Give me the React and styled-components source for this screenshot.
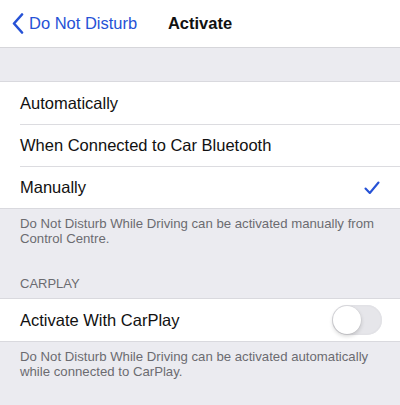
import React, { useState } from "react";
import styled, { createGlobalStyle } from "styled-components";

const Global = createGlobalStyle`
  html, body { margin: 0; padding: 0; }
  body {
    background: #ebebf0;
    font-family: "Liberation Sans", Arial, sans-serif;
    -webkit-font-smoothing: antialiased;
  }
  *, *::before, *::after { box-sizing: border-box; }
`;

const Page = styled.div`
  width: 400px;
  height: 405px;
  background: #ebebf0;
  overflow: hidden;
  display: flex;
  flex-direction: column;
`;

const NavBar = styled.header`
  height: 48px;
  background: #ffffff;
  border-bottom: 1px solid #d6d6da;
  display: grid;
  grid-template-columns: 1fr auto 1fr;
  align-items: center;
  flex-shrink: 0;
`;

const BackButton = styled.button`
  justify-self: start;
  display: flex;
  align-items: center;
  gap: 5px;
  background: none;
  border: 0;
  padding: 0 0 0 12px;
  color: #2652d6;
  font-family: inherit;
  font-size: 16.5px;
  cursor: pointer;
`;

const Title = styled.h1`
  margin: 0;
  font-size: 16.5px;
  font-weight: 700;
  color: #111;
`;

const Spacer = styled.div`
  height: ${(p) => p.$h}px;
  flex-shrink: 0;
`;

const Group = styled.ul`
  list-style: none;
  margin: 0;
  padding: 0;
  background: #ffffff;
  border-top: 1px solid #d9d9de;
  border-bottom: 1px solid #d9d9de;
`;

const Row = styled.li`
  height: 42px;
  display: flex;
  align-items: center;
  justify-content: space-between;
  margin-left: 20px;
  padding-right: 20px;
  font-size: 16.5px;
  color: #111;
  & + & {
    border-top: 1px solid #dcdce0;
  }
`;

const Footer = styled.p`
  margin: 0;
  padding: 7px 20px 0;
  font-size: 13.2px;
  line-height: 15px;
  color: #6b6b70;
`;

const SectionHeader = styled.div`
  padding: 0 20px 7px;
  font-size: 13px;
  line-height: 15px;
  color: #6b6b70;
  text-transform: uppercase;
`;

const Track = styled.button`
  position: relative;
  width: 50px;
  height: 30px;
  border-radius: 15px;
  border: 0;
  padding: 0;
  margin-right: -2px;
  background: ${(p) => (p.$on ? "#34c759" : "#e6e6ea")};
  box-shadow: inset 0 0 0 1.5px ${(p) => (p.$on ? "#34c759" : "#e2e2e6")};
  cursor: pointer;
`;

const Knob = styled.span`
  position: absolute;
  top: 1px;
  left: ${(p) => (p.$on ? "21px" : "1px")};
  width: 28px;
  height: 28px;
  border-radius: 50%;
  background: #ffffff;
  box-shadow: 0 2px 4px rgba(0, 0, 0, 0.18), 0 0 0 0.5px rgba(0, 0, 0, 0.06);
`;

const Chevron = () => (
  <svg width="12" height="21" viewBox="0 0 12 21" fill="none">
    <path d="M10 1.5 L2 10.5 L10 19.5" stroke="#2652d6" strokeWidth="2.6" strokeLinecap="round" strokeLinejoin="round" />
  </svg>
);

const Check = () => (
  <svg width="16" height="14" viewBox="0 0 16 14" fill="none">
    <path d="M1.5 7.5 L5.8 12 L14.5 1.5" stroke="#2652d6" strokeWidth="2.1" strokeLinecap="round" strokeLinejoin="round" />
  </svg>
);

export default function App() {
  const [mode, setMode] = useState("manual");
  const [carplay, setCarplay] = useState(false);
  const options = [
    { id: "auto", label: "Automatically" },
    { id: "bt", label: "When Connected to Car Bluetooth" },
    { id: "manual", label: "Manually" },
  ];
  return (
    <Page>
      <Global />
      <NavBar>
        <BackButton>
          <Chevron />
          Do Not Disturb
        </BackButton>
        <Title>Activate</Title>
        <span />
      </NavBar>
      <Spacer $h={33} />
      <Group>
        {options.map((o) => (
          <Row key={o.id} onClick={() => setMode(o.id)}>
            {o.label}
            {mode === o.id && <Check />}
          </Row>
        ))}
      </Group>
      <Footer>
        Do Not Disturb While Driving can be activated manually from Control Centre.
      </Footer>
      <Spacer $h={30} />
      <SectionHeader>CarPlay</SectionHeader>
      <Group>
        <Row>
          Activate With CarPlay
          <Track $on={carplay} onClick={() => setCarplay(!carplay)} aria-label="Activate With CarPlay">
            <Knob $on={carplay} />
          </Track>
        </Row>
      </Group>
      <Footer>
        Do Not Disturb While Driving can be activated automatically while connected to CarPlay.
      </Footer>
    </Page>
  );
}
